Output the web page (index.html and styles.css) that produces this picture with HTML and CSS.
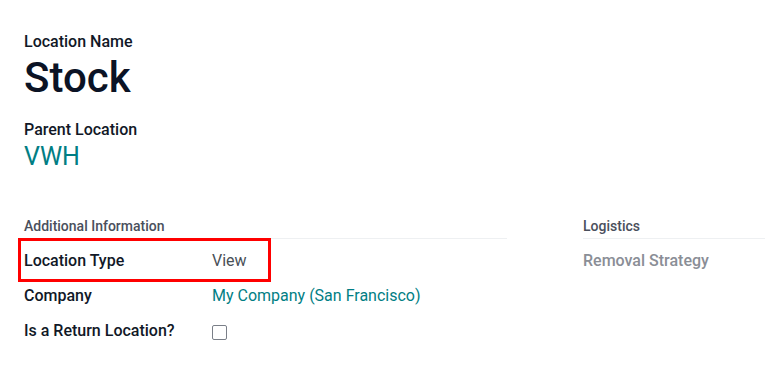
FILE: index.html
```html
<!DOCTYPE html>
<html>
  <head>
    <title>Stock</title>
    <link rel="stylesheet" href="styles.css">
  </head>
  <body>
    <article class="sheet">
      <div class="title">
        <label class="title-label">Location Name</label>
        <h1>Stock</h1>
      </div>
      <div class="parent">
        <label class="title-label">Parent Location</label>
        <a class="parent-link">VWH</a>
      </div>

      <div class="groups">
        <section class="group group-main">
          <h2 class="group-title">Additional Information</h2>
          <div class="row row-highlight">
            <span class="row-label">Location Type</span>
            <span class="row-value">View</span>
          </div>
          <div class="row">
            <span class="row-label">Company</span>
            <a class="row-value row-link">My Company (San Francisco)</a>
          </div>
          <div class="row">
            <span class="row-label">Is a Return Location?</span>
            <span class="row-value"><input type="checkbox" class="check" /></span>
          </div>
        </section>

        <section class="group group-side">
          <h2 class="group-title">Logistics</h2>
          <div class="row">
            <span class="row-label row-muted">Removal Strategy</span>
          </div>
        </section>
      </div>
    </article>
  </body>
</html>
```

FILE: styles.css
```css
* {
  box-sizing: border-box;
}

body {
  margin: 0;
  font-family: Roboto, "Noto Sans", sans-serif;
  font-size: 16px;
  color: #1f2937;
  background: #fff;
}

.sheet {
  padding: 31px 0 0 24px;
  width: 765px;
  overflow: hidden;
}

.title-label {
  display: block;
  font-size: 16px;
  font-weight: 500;
  color: #111827;
  line-height: 22px;
}

h1 {
  margin: 0;
  font-size: 42px;
  font-weight: 500;
  line-height: 50px;
  color: #0b1325;
}

.parent {
  margin-top: 16px;
}

.parent-link {
  display: block;
  font-size: 25px;
  line-height: 32px;
  color: #017e84;
}

.groups {
  display: flex;
  margin-top: 43px;
  gap: 76px;
}

.group-main {
  width: 483px;
  flex-shrink: 0;
}

.group-side {
  flex-grow: 1;
}

.group-title {
  margin: 0;
  font-size: 14px;
  font-weight: 500;
  color: #4a4f5c;
  line-height: 20px;
  padding-bottom: 2px;
  border-bottom: 1px solid #eef0f2;
}

.row {
  display: flex;
  align-items: center;
  height: 35px;
  position: relative;
}

.row:first-of-type {
  margin-top: 4px;
}

.row-label {
  width: 188px;
  font-weight: 500;
  color: #111827;
}

.row-muted {
  color: #8a8e96;
}

.row-value {
  color: #495057;
}

.row-link {
  color: #017e84;
}

.row-highlight::after {
  content: "";
  position: absolute;
  left: -6px;
  top: -5px;
  width: 247px;
  height: 38px;
  border: 3px solid #f00;
}

.check {
  display: block;
  margin: 3px 0 0 0;
  width: 15px;
  height: 15px;
  -webkit-appearance: none;
  appearance: none;
  border: 1px solid #7a7f88;
  border-radius: 2px;
  background: #fff;
}
```
